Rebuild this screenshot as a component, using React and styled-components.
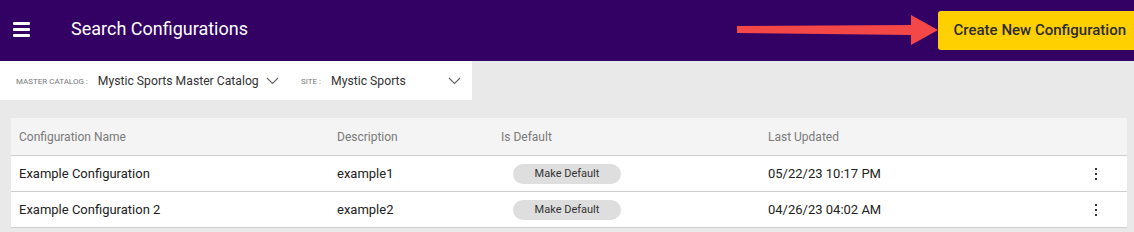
import React from 'react';
import styled, { createGlobalStyle } from 'styled-components';

const GlobalStyle = createGlobalStyle`
  html, body { margin: 0; padding: 0; }
  body {
    background: #e9e9e9;
    font-family: Roboto, "Liberation Sans", Arial, sans-serif;
    width: 1134px;
    overflow: hidden;
  }
`;

const Header = styled.header`
  height: 61px;
  background: #330063;
  display: flex;
  align-items: center;
  padding-left: 13px;
`;

const Burger = styled.button`
  width: 17px;
  height: 15px;
  padding: 0;
  border: 0;
  background: transparent;
  display: flex;
  flex-direction: column;
  justify-content: space-between;
  margin-top: -3px;
  span {
    display: block;
    height: 3px;
    background: #fff;
    border-radius: 1px;
  }
`;

const Title = styled.h1`
  margin: 0 0 0 41px;
  color: #fff;
  font-size: 18px;
  font-weight: 400;
  margin-top: -5px;
  flex: 1;
`;

const Arrow = styled.svg`
  display: block;
  margin-top: -1px;
`;

const CreateButton = styled.button`
  height: 39px;
  margin-top: -1px;
  padding: 0 8px 0 16px;
  border: 0;
  border-radius: 3px 0 0 3px;
  background: #ffd000;
  color: #2b2b2b;
  font-family: inherit;
  font-size: 15px;
  font-weight: 500;
  white-space: nowrap;
`;

const FilterBar = styled.div`
  width: 472px;
  height: 39px;
  background: #fff;
  display: flex;
  align-items: center;
  padding-left: 16px;
  box-sizing: border-box;
`;

const Filter = styled.div`
  display: flex;
  align-items: center;
  width: ${p => p.$width}px;
`;

const FilterLabel = styled.span`
  font-size: 8px;
  color: #777;
  text-transform: uppercase;
  margin-right: 10px;
  margin-top: 2px;
`;

const FilterValue = styled.span`
  font-size: 12.2px;
  color: #333;
  flex: ${p => (p.$grow ? 1 : 'none')};
`;

const Chevron = styled.svg`
  margin-left: 7px;
  margin-top: 1px;
`;

const Content = styled.main`
  padding: 18px 7px 0 11px;
`;

const Table = styled.div`
  background: #fff;
`;

const Row = styled.div`
  display: grid;
  grid-template-columns: 318px 164px 267px 1fr 62px;
  align-items: center;
  height: ${p => (p.$head ? 37 : 35)}px;
  background: ${p => (p.$head ? '#f4f4f4' : '#fff')};
  border-bottom: 1px solid #cfcfcf;
  font-size: ${p => (p.$head ? 12 : 13)}px;
  color: ${p => (p.$head ? '#7a7a7a' : '#222')};
`;

const Cell = styled.div`
  padding-left: 8px;
  white-space: nowrap;
  display: flex;
  justify-content: ${p => (p.$center ? 'center' : 'flex-start')};
`;

const Pill = styled.button`
  margin-left: 12px;
  width: 108px;
  height: 20px;
  border: 0;
  border-radius: 10px;
  background: #dedede;
  color: #333;
  font-family: inherit;
  font-size: 11px;
  padding: 0;
`;

const Kebab = styled.div`
  display: flex;
  flex-direction: column;
  gap: 3px;
  margin-left: -8px;
  span {
    width: 2px;
    height: 2px;
    background: #333;
  }
`;

const ChevronIcon = () => (
  <Chevron width="13" height="8" viewBox="0 0 13 8">
    <path d="M1 1l5.5 5.5L12 1" fill="none" stroke="#666" strokeWidth="1.1" />
  </Chevron>
);

const rows = [
  { name: 'Example Configuration', desc: 'example1', updated: '05/22/23 10:17 PM' },
  { name: 'Example Configuration 2', desc: 'example2', updated: '04/26/23 04:02 AM' },
];

export default function App() {
  return (
    <>
      <GlobalStyle />
      <Header>
        <Burger aria-label="menu">
          <span />
          <span />
          <span />
        </Burger>
        <Title>Search Configurations</Title>
        <Arrow width="201" height="32" viewBox="0 0 201 32">
          <polygon points="0,12 174,11 174,1 201,16 174,31 174,21 0,19" fill="#f44848" />
        </Arrow>
        <CreateButton>Create New Configuration</CreateButton>
      </Header>
      <FilterBar>
        <Filter $width={285}>
          <FilterLabel>Master Catalog :</FilterLabel>
          <FilterValue>Mystic Sports Master Catalog</FilterValue>
          <ChevronIcon />
        </Filter>
        <Filter $width={160}>
          <FilterLabel>Site :</FilterLabel>
          <FilterValue $grow>Mystic Sports</FilterValue>
          <ChevronIcon />
        </Filter>
      </FilterBar>
      <Content>
        <Table>
          <Row $head>
            <Cell>Configuration Name</Cell>
            <Cell>Description</Cell>
            <Cell>Is Default</Cell>
            <Cell>Last Updated</Cell>
            <Cell />
          </Row>
          {rows.map(r => (
            <Row key={r.name}>
              <Cell>{r.name}</Cell>
              <Cell>{r.desc}</Cell>
              <Cell>
                <Pill>Make Default</Pill>
              </Cell>
              <Cell>{r.updated}</Cell>
              <Cell $center>
                <Kebab>
                  <span />
                  <span />
                  <span />
                </Kebab>
              </Cell>
            </Row>
          ))}
        </Table>
      </Content>
    </>
  );
}
